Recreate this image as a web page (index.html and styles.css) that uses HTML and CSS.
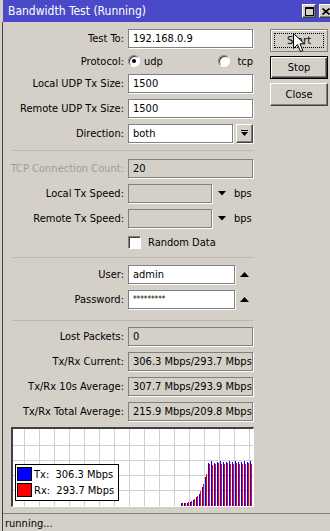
FILE: index.html
```html
<!DOCTYPE html>
<html>
<head>
<meta charset="utf-8">
<title>Bandwidth Test</title>
<link rel="stylesheet" href="styles.css">
</head>
<body>
<div class="window">
  <div class="titlebar">
    <span class="title">Bandwidth Test (Running)</span>
    <div class="tb-btns">
      <span class="tb-btn"><svg width="9" height="9" viewBox="0 0 9 9"><rect x="0.5" y="0.5" width="8" height="8" fill="none" stroke="#000"/><rect x="0" y="0" width="9" height="2" fill="#000"/></svg></span>
      <span class="tb-btn"><svg width="8" height="7" viewBox="0 0 8 7"><path d="M0.5 0.5L7.5 6.5M7.5 0.5L0.5 6.5" stroke="#000" stroke-width="1.6" fill="none"/></svg></span>
    </div>
  </div>
  <div class="client">
    <div class="main">
      <div class="form">
        <div class="row"><span class="lbl">Test To:</span><div class="field">192.168.0.9</div></div>
        <div class="row row-radio"><span class="lbl">Protocol:</span>
          <div class="ctl">
            <span class="opt opt-udp"><span class="radio on"></span><span class="opt-txt">udp</span></span>
            <span class="opt opt-tcp"><span class="radio"></span><span class="opt-txt tcp-txt">tcp</span></span>
          </div>
        </div>
        <div class="row"><span class="lbl">Local UDP Tx Size:</span><div class="field">1500</div></div>
        <div class="row"><span class="lbl">Remote UDP Tx Size:</span><div class="field">1500</div></div>
        <div class="row"><span class="lbl">Direction:</span>
          <div class="ctl"><div class="field f-dir">both</div><span class="dd-btn"><svg width="7" height="7" viewBox="0 0 7 7"><rect x="0" y="0" width="7" height="1" fill="#000"/><polygon points="0,2 7,2 3.5,6" fill="#000"/></svg></span></div>
        </div>
        <div class="sep sep1"></div>
        <div class="row"><span class="lbl dis">TCP Connection Count:</span><div class="field ro">20</div></div>
        <div class="row"><span class="lbl">Local Tx Speed:</span>
          <div class="ctl"><div class="field ro f-speed"></div><svg class="arr-down" width="8" height="5" viewBox="0 0 8 5"><polygon points="0,0 8,0 4,4.5" fill="#000"/></svg><span class="unit">bps</span></div>
        </div>
        <div class="row"><span class="lbl">Remote Tx Speed:</span>
          <div class="ctl"><div class="field ro f-speed"></div><svg class="arr-down" width="8" height="5" viewBox="0 0 8 5"><polygon points="0,0 8,0 4,4.5" fill="#000"/></svg><span class="unit">bps</span></div>
        </div>
        <div class="row row-check"><span class="lbl"></span>
          <div class="ctl"><span class="check"></span><span class="check-txt">Random Data</span></div>
        </div>
        <div class="sep sep2"></div>
        <div class="row"><span class="lbl">User:</span>
          <div class="ctl"><div class="field f-user">admin</div><svg class="arr-up" width="9" height="5" viewBox="0 0 9 5"><polygon points="4.5,0 9,5 0,5" fill="#000"/></svg></div>
        </div>
        <div class="row"><span class="lbl">Password:</span>
          <div class="ctl"><div class="field f-user"><span class="pw">*********</span></div><svg class="arr-up" width="9" height="5" viewBox="0 0 9 5"><polygon points="4.5,0 9,5 0,5" fill="#000"/></svg></div>
        </div>
        <div class="sep sep3"></div>
        <div class="row"><span class="lbl">Lost Packets:</span><div class="field ro">0</div></div>
        <div class="row"><span class="lbl">Tx/Rx Current:</span><div class="field ro">306.3 Mbps/293.7 Mbps</div></div>
        <div class="row"><span class="lbl">Tx/Rx 10s Average:</span><div class="field ro">307.7 Mbps/293.9 Mbps</div></div>
        <div class="row"><span class="lbl">Tx/Rx Total Average:</span><div class="field ro">215.9 Mbps/209.8 Mbps</div></div>
        <div class="graph">
          <svg class="chart" width="240" height="77" viewBox="0 0 240 77" shape-rendering="crispEdges">
            <g fill="#cfcfcf">
              <rect x="11" y="0" width="1" height="77"/><rect x="26" y="0" width="1" height="77"/><rect x="41" y="0" width="1" height="77"/><rect x="56" y="0" width="1" height="77"/>
              <rect x="71" y="0" width="1" height="77"/><rect x="86" y="0" width="1" height="77"/><rect x="101" y="0" width="1" height="77"/><rect x="116" y="0" width="1" height="77"/>
              <rect x="131" y="0" width="1" height="77"/><rect x="146" y="0" width="1" height="77"/><rect x="161" y="0" width="1" height="77"/><rect x="176" y="0" width="1" height="77"/>
              <rect x="191" y="0" width="1" height="77"/><rect x="206" y="0" width="1" height="77"/><rect x="221" y="0" width="1" height="77"/><rect x="236" y="0" width="1" height="77"/>
              <rect x="0" y="16" width="240" height="1"/><rect x="0" y="31" width="240" height="1"/><rect x="0" y="46" width="240" height="1"/><rect x="0" y="61" width="240" height="1"/>
            </g>
            <g fill="#0000ff">
              <rect x="168" y="74" width="1" height="3"/><rect x="171" y="74" width="1" height="3"/><rect x="174" y="74" width="1" height="3"/><rect x="177" y="73" width="1" height="4"/>
              <rect x="180" y="71" width="1" height="6"/><rect x="183" y="68" width="1" height="9"/><rect x="186" y="65" width="1" height="12"/><rect x="189" y="58" width="1" height="19"/>
              <rect x="192" y="48" width="1" height="29"/><rect x="195" y="34" width="1" height="43"/><rect x="198" y="32" width="1" height="45"/><rect x="201" y="34" width="1" height="43"/>
              <rect x="204" y="33" width="1" height="44"/><rect x="207" y="32" width="1" height="45"/><rect x="210" y="33" width="1" height="44"/><rect x="213" y="33" width="1" height="44"/>
              <rect x="216" y="32" width="1" height="45"/><rect x="219" y="33" width="1" height="44"/><rect x="222" y="32" width="1" height="45"/><rect x="225" y="33" width="1" height="44"/>
              <rect x="228" y="33" width="1" height="44"/><rect x="231" y="32" width="1" height="45"/><rect x="234" y="33" width="1" height="44"/><rect x="237" y="32" width="1" height="45"/>
            </g>
            <g fill="#ff0000">
              <rect x="169" y="74" width="1" height="3"/><rect x="172" y="74" width="1" height="3"/><rect x="175" y="73" width="1" height="4"/><rect x="178" y="72" width="1" height="5"/>
              <rect x="181" y="70" width="1" height="7"/><rect x="184" y="67" width="1" height="10"/><rect x="187" y="62" width="1" height="15"/><rect x="190" y="55" width="1" height="22"/>
              <rect x="193" y="45" width="1" height="32"/><rect x="196" y="35" width="1" height="42"/><rect x="199" y="36" width="1" height="41"/><rect x="202" y="35" width="1" height="42"/>
              <rect x="205" y="34" width="1" height="43"/><rect x="208" y="35" width="1" height="42"/><rect x="211" y="35" width="1" height="42"/><rect x="214" y="34" width="1" height="43"/>
              <rect x="217" y="35" width="1" height="42"/><rect x="220" y="35" width="1" height="42"/><rect x="223" y="34" width="1" height="43"/><rect x="226" y="35" width="1" height="42"/>
              <rect x="229" y="35" width="1" height="42"/><rect x="232" y="35" width="1" height="42"/><rect x="235" y="34" width="1" height="43"/><rect x="238" y="35" width="1" height="42"/>
            </g>
          </svg>
          <div class="legend">
            <div class="lg-row"><span class="sw sw-tx"></span><span class="lg-txt">Tx:  306.3 Mbps</span></div>
            <div class="lg-row"><span class="sw sw-rx"></span><span class="lg-txt">Rx:  293.7 Mbps</span></div>
          </div>
        </div>
      </div>
      <div class="buttons">
        <div class="btn btn-start">Start</div>
        <div class="btn btn-stop">Stop</div>
        <div class="btn btn-close">Close</div>
      </div>
    </div>
    <div class="status"><span class="status-txt">running...</span></div>
  </div>
</div>
<svg class="cursor" width="13" height="20" viewBox="0 0 13 20"><path d="M0.5 0.5V15.5L4.5 11.5L7.5 18.5L9.8 17.5L7 10.8H11.5Z" fill="#fff" stroke="#000" stroke-width="1" stroke-linejoin="miter"/></svg>
</body>
</html>
```
FILE: styles.css
```css
html, body {
  margin: 0;
  padding: 0;
  overflow: hidden;
}
body {
  width: 330px;
  height: 531px;
  background: #d4d0c8;
  font-family: "DejaVu Sans Condensed", "DejaVu Sans", sans-serif;
  font-stretch: semi-condensed;
  font-size: 11px;
  color: #000;
}
.window {
  margin-left: 2px;
  width: 334px;
}
.titlebar {
  margin-left: 1px;
  height: 22px;
  background: #4a4ac8;
  display: flex;
  align-items: center;
  color: #fff;
}
.title {
  flex: 1;
  padding-left: 5px;
  font-size: 12px;
  white-space: nowrap;
}
.tb-btns {
  display: flex;
  gap: 3px;
  margin-right: 3px;
}
.tb-btn {
  width: 14px;
  height: 14px;
  box-sizing: border-box;
  background: #d4d0c8;
  border: 1px solid;
  border-color: #fff #404040 #404040 #fff;
  box-shadow: inset -1px -1px 0 #808080;
  display: flex;
  align-items: center;
  justify-content: center;
}
.tb-btn svg { display: block; }
.client {
  border-left: 1px solid #404040;
}
.main {
  display: flex;
  padding-top: 7px;
}
.form {
  width: 250px;
  display: flex;
  flex-direction: column;
}
.row {
  display: grid;
  grid-template-columns: 121px 125px;
  column-gap: 4px;
  align-items: center;
  height: 19px;
  margin-top: 6px;
}
.row:first-child { margin-top: 0; }
.sep + .row { margin-top: 0; }
.row-radio { height: 14px; }
.row-check { height: 17px; }
.lbl {
  text-align: right;
  white-space: nowrap;
}
.lbl.dis { color: #9f9c96; }
.field {
  height: 19px;
  box-sizing: border-box;
  border: 1px solid #808080;
  box-shadow: 1px 1px 0 #fff;
  background: #fff;
  padding: 0 4px;
  line-height: 17px;
  white-space: nowrap;
  overflow: hidden;
}
.field.ro { background: #d4d0c8; }
.ctl {
  display: flex;
  align-items: center;
}
.f-dir { width: 105px; }
.f-speed { width: 84px; }
.f-user { width: 107px; }
.dd-btn {
  margin-left: 3px;
  width: 17px;
  height: 19px;
  box-sizing: border-box;
  border: 1px solid;
  border-color: #fff #404040 #404040 #fff;
  box-shadow: inset -1px -1px 0 #808080, 1px 1px 0 #fff;
  display: flex;
  align-items: center;
  justify-content: center;
}
.dd-btn svg { display: block; }
.arr-down { margin-left: 6px; display: block; }
.arr-up { margin-left: 5px; display: block; }
.unit { margin-left: 8px; }
.pw {
  font-size: 8px;
  position: relative;
  top: -1px;
}
.opt {
  display: flex;
  align-items: center;
}
.opt-udp { width: 91px; }
.opt-txt { margin-left: 4px; }
.tcp-txt { margin-left: 7px; }
.radio {
  width: 12px;
  height: 12px;
  box-sizing: border-box;
  border-radius: 50%;
  border: 1px solid;
  border-color: #808080 #fff #fff #808080;
  box-shadow: inset 1px 1px 0 #404040;
  background: #fff;
  position: relative;
}
.radio.on::after {
  content: "";
  position: absolute;
  left: 3px;
  top: 3px;
  width: 4px;
  height: 4px;
  border-radius: 50%;
  background: #000;
}
.check {
  width: 13px;
  height: 13px;
  box-sizing: border-box;
  border: 1px solid;
  border-color: #808080 #fff #fff #808080;
  box-shadow: inset 1px 1px 0 #404040;
  background: #fff;
}
.check-txt { margin-left: 7px; }
.sep {
  height: 1px;
  width: 241px;
  margin-left: 9px;
  background: #bdb5b5;
}
.sep1 { margin-top: 7px; margin-bottom: 8px; }
.sep2 { margin-top: 6px; margin-bottom: 7px; }
.sep3 { margin-top: 11px; margin-bottom: 6px; }
.graph {
  position: relative;
  margin-top: 6px;
  margin-left: 8px;
  width: 243px;
  height: 80px;
  box-sizing: border-box;
  border-style: solid;
  border-width: 2px 1px 1px 2px;
  border-color: #404040 #fff #fff #404040;
  background: #fff;
}
.chart { display: block; }
.legend {
  position: absolute;
  left: 2px;
  top: 35px;
  width: 104px;
  height: 37px;
  box-sizing: border-box;
  border: 1px solid #000;
  background: #fff;
  padding: 2px 1px 3px;
  display: flex;
  flex-direction: column;
  gap: 2px;
}
.lg-row {
  display: flex;
  align-items: center;
  height: 14px;
}
.sw {
  width: 15px;
  height: 14px;
  box-sizing: border-box;
  border: 1px solid #000;
}
.sw-tx { background: #0000ff; }
.sw-rx { background: #ff0000; }
.lg-txt {
  margin-left: 2px;
  white-space: pre;
}
.buttons {
  margin-left: 17px;
  width: 58px;
  display: flex;
  flex-direction: column;
  gap: 4px;
}
.btn {
  height: 23px;
  box-sizing: border-box;
  display: flex;
  align-items: center;
  justify-content: center;
  background: #d4d0c8;
}
.btn-start {
  position: relative;
  border: 1px solid #808080;
  box-shadow: inset 1px 1px 0 #fff;
}
.btn-start::after {
  content: "";
  position: absolute;
  left: 3px;
  top: 3px;
  right: 3px;
  bottom: 3px;
  border: 1px dotted #000;
}
.btn-stop {
  border: 1px solid #000;
  box-shadow: inset 1px 1px 0 #fff, inset -1px -1px 0 #404040, inset -2px -2px 0 #808080;
}
.btn-close {
  border: 1px solid;
  border-color: #fff #404040 #404040 #fff;
  box-shadow: inset -1px -1px 0 #808080;
}
.status {
  margin-top: 6px;
  height: 18px;
  border-top: 1px solid #808080;
  display: flex;
  align-items: center;
}
.status-txt {
  padding-left: 2px;
}
.cursor {
  position: absolute;
  left: 293px;
  top: 33px;
}
```
